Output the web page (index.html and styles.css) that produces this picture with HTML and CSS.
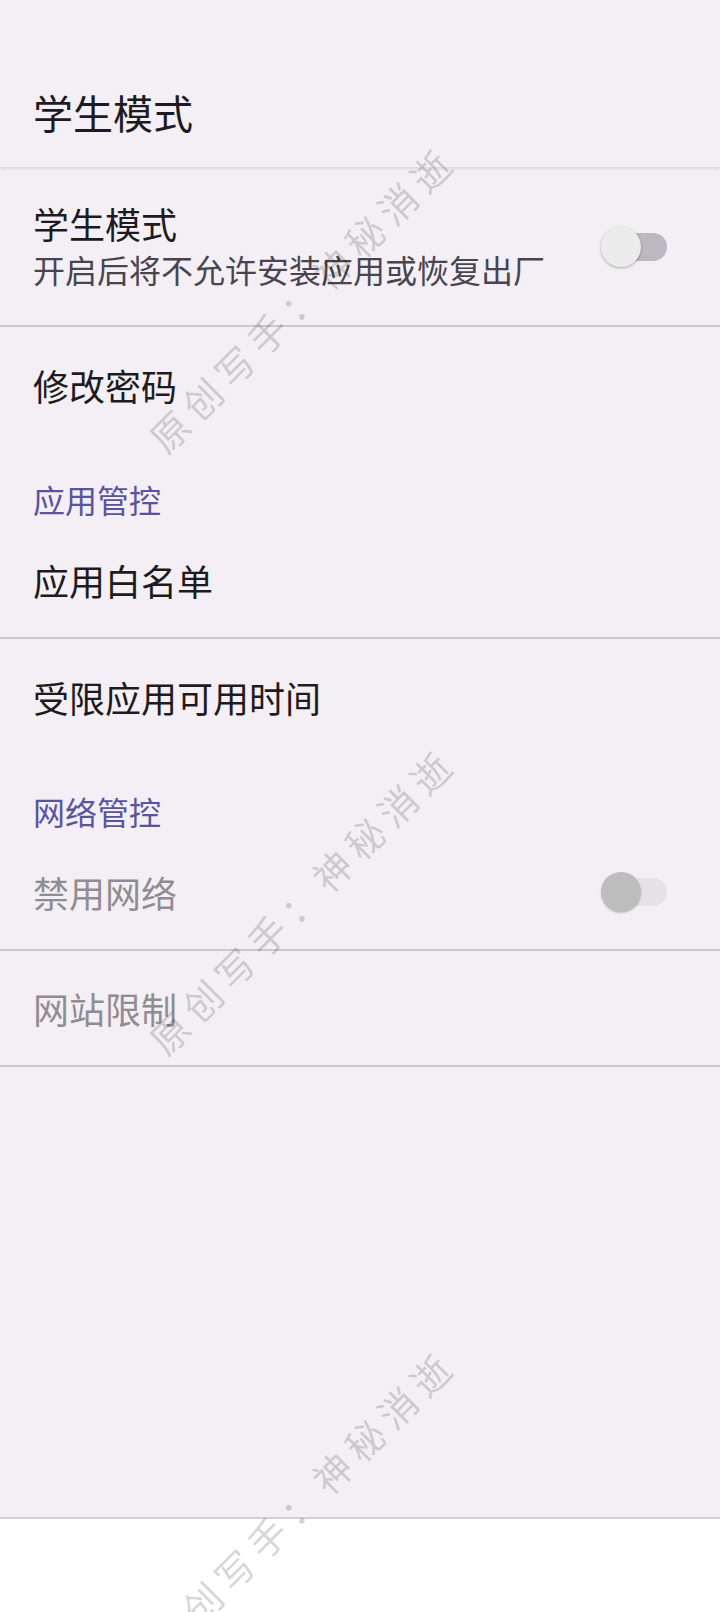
FILE: index.html
```html
<!DOCTYPE html>
<html lang="zh-CN">
<head>
    <meta charset="UTF-8">
    <meta name="viewport" content="width=device-width, initial-scale=1.0">
    <title>学生模式</title>
    <link rel="stylesheet" href="styles.css">
</head>
<body>
    <div id="app">
        <div id="top-bar">
            <div id="title">学生模式</div>
        </div>

        <div id="prefs">
            <div class="pref pref-two-line divided">
                <div class="pref-text">
                    <div class="pref-title">学生模式</div>
                    <div class="pref-summary">开启后将不允许安装应用或恢复出厂</div>
                </div>
                <div class="switch">
                    <span class="track"></span>
                    <span class="thumb"></span>
                </div>
            </div>
            <div class="pref">
                <div class="pref-title">修改密码</div>
            </div>

            <div class="category">应用管控</div>
            <div class="pref divided">
                <div class="pref-title">应用白名单</div>
            </div>
            <div class="pref">
                <div class="pref-title">受限应用可用时间</div>
            </div>

            <div class="category">网络管控</div>
            <div class="pref divided disabled">
                <div class="pref-title">禁用网络</div>
                <div class="switch">
                    <span class="track"></span>
                    <span class="thumb"></span>
                </div>
            </div>
            <div class="pref divided disabled">
                <div class="pref-title">网站限制</div>
            </div>
        </div>

        <div id="bottom-area"></div>

        <!-- Watermark overlay -->
        <div id="watermarks">
            <span class="mark" style="top: 298px;">原创写手：神秘消逝</span>
            <span class="mark" style="top: 900px;">原创写手：神秘消逝</span>
            <span class="mark" style="top: 1502px;">原创写手：神秘消逝</span>
        </div>
    </div>
</body>
</html>
```

FILE: styles.css
```css
/* Basic Reset */
* { margin: 0; padding: 0; box-sizing: border-box; font-family: "Noto Sans CJK SC", "Noto Sans", sans-serif; }
body { background-color: #fff; color: #1d1b20; }

#app { position: relative; display: flex; flex-direction: column; width: 720px; height: 1612px; overflow: hidden; background-color: #f3eff4; }

/* Top Bar */
#top-bar { height: 168px; padding: 56px 33px 0; display: flex; align-items: center; border-bottom: 1px solid #dfdbe0; box-shadow: 0 1px 3px rgba(0, 0, 0, 0.10); position: relative; z-index: 1; }
#title { font-size: 40px; line-height: 48px; color: #1d1b20; }

/* Preference list */
#prefs { flex: 1; display: flex; flex-direction: column; }
.pref { height: 116px; padding: 0 53px 0 33px; display: flex; align-items: center; justify-content: space-between; }
.pref.divided { border-bottom: 2px solid #cbc7cd; }
.pref-two-line { height: 159px; }
.pref-title { font-size: 36px; line-height: 44px; color: #1d1b20; }
.pref-summary { font-size: 32px; line-height: 48px; color: #49454f; }
.pref.disabled .pref-title { color: #8f8d91; }

.category { height: 80px; padding: 40px 33px 0; font-size: 32px; line-height: 32px; color: #5a54a0; }

/* Switch */
.switch { position: relative; width: 66px; height: 40px; flex-shrink: 0; }
.switch .track { position: absolute; left: 6px; right: 0; top: 6px; height: 28px; border-radius: 14px; background-color: #bcb8bf; }
.switch .thumb { position: absolute; left: 0; top: 0; width: 40px; height: 40px; border-radius: 50%; background-color: #ececec; box-shadow: 0 1px 3px rgba(0, 0, 0, 0.3); }
.pref.disabled .switch .track { background-color: #e5e1e7; }
.pref.disabled .switch .thumb { background-color: #bdbdbd; box-shadow: 0 1px 2px rgba(0, 0, 0, 0.2); }

/* Bottom area */
#bottom-area { height: 95px; background-color: #fff; border-top: 2px solid #d2cfd3; }

/* Watermark */
#watermarks { position: absolute; top: 0; left: 0; width: 100%; height: 100%; pointer-events: none; z-index: 2; }
.mark { position: absolute; left: 302px; transform: translate(-50%, -50%) rotate(-45deg); font-size: 38px; line-height: 38px; letter-spacing: 8px; white-space: nowrap; color: rgba(0, 0, 0, 0.17); }
```
